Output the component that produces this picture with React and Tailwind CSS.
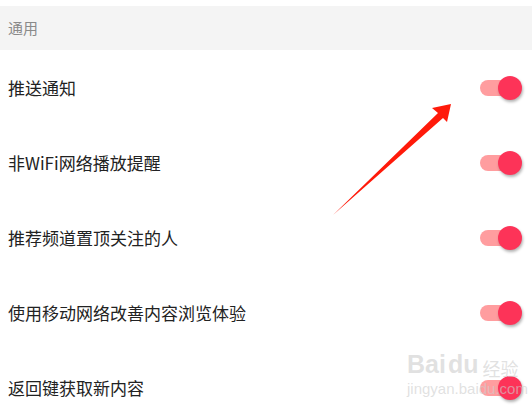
import React from "react";

const rows = [
  "推送通知",
  "非WiFi网络播放提醒",
  "推荐频道置顶关注的人",
  "使用移动网络改善内容浏览体验",
  "返回键获取新内容",
];

function Toggle() {
  return (
    <div className="relative w-[42px] h-[24px] shrink-0">
      <div className="absolute left-0 top-[4px] w-[34px] h-[16px] rounded-full bg-[#ff9d9f]" />
      <div className="absolute right-0 top-0 w-[24px] h-[24px] rounded-full bg-[#fd3358] shadow-[1px_2px_3px_rgba(0,0,0,0.3)]" />
    </div>
  );
}

export default function App() {
  return (
    <div
      className="relative w-[532px] h-[405px] overflow-hidden bg-white"
      style={{ fontFamily: '"Noto Sans CJK SC", "Noto Sans", sans-serif' }}
    >
      <div className="h-[6px]" />
      <div className="h-[44px] bg-[#f4f4f4] flex items-center pl-[8px] text-[15px] text-[#8a8a8a]">
        通用
      </div>
      {rows.map((r) => (
        <div key={r} className="h-[75px] flex items-center justify-between pl-[8px] pr-[10px]">
          <span className="text-[17px] text-[#222]">{r}</span>
          <Toggle />
        </div>
      ))}
      <svg className="absolute left-0 top-0 pointer-events-none" width="532" height="405">
        <path
          d="M333 215 L438 113 L432 108 L451 104 L447 122 L443 118 Z"
          fill="#ff1a0a"
        />
      </svg>
      <div className="absolute left-[407px] top-[352px] pointer-events-none text-[rgba(205,205,205,0.6)] leading-none">
        <div className="flex items-end gap-[2px]">
          <span className="text-[25px] font-bold" style={{ fontFamily: '"Liberation Sans", sans-serif' }}>Bai</span>
          <span className="text-[25px] font-bold" style={{ fontFamily: '"Liberation Sans", sans-serif' }}>du</span>
          <span className="text-[18px] ml-[2px]">经验</span>
        </div>
        <div className="text-[15px] mt-[4px]" style={{ fontFamily: '"Liberation Sans", sans-serif' }}>jingyan.baidu.com</div>
      </div>
    </div>
  );
}
